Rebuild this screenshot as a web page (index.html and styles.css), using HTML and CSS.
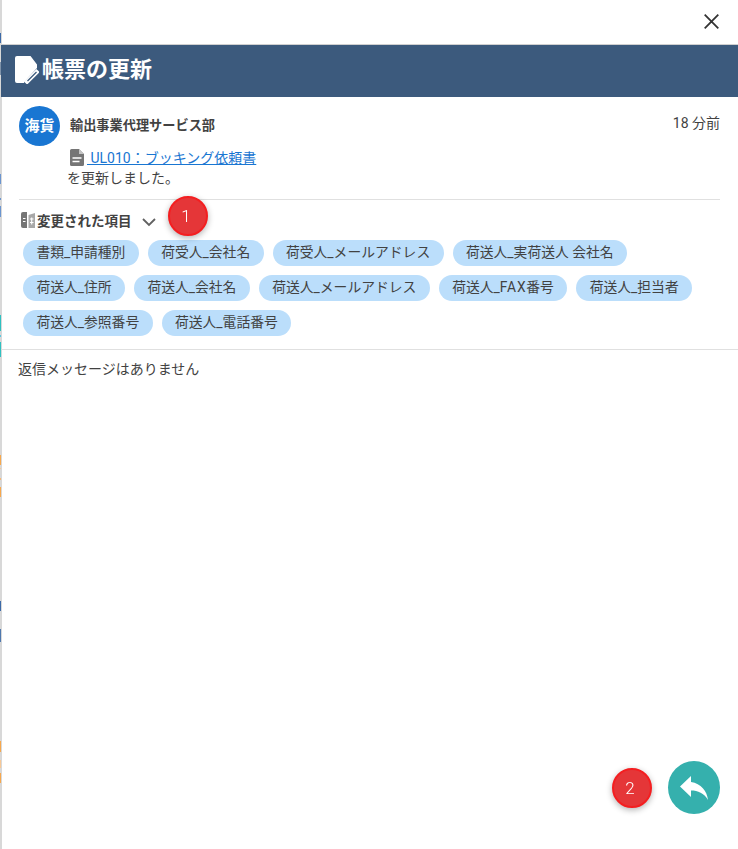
FILE: index.html
```html
<!DOCTYPE html>
<html lang="ja">
<head>
<meta charset="utf-8">
<title>帳票の更新</title>
<link rel="stylesheet" href="styles.css">
</head>
<body>
<div class="page">
  <div class="edge"></div>
  <main class="drawer">
    <div class="topbar">
      <svg class="close" viewBox="0 0 15 15" width="15" height="15"><path d="M.7.7L14.300 14.300M14.300.7L.7 14.300" fill="none" stroke="#333" stroke-width="1.800"/></svg>
    </div>
    <header class="title">
      <svg class="title-icon" viewBox="0 0 24 28" width="24" height="28"><path d="M2 0h13.500L22 8.500v3.500L9.500 25.500 9 27H2a2 2 0 0 1-2-2V2a2 2 0 0 1 2-2z" fill="#fff"/><path d="M10.500 27L23 14.500" stroke="#fff" stroke-width="4.500" fill="none"/><path d="M12.500 25L21.500 16" stroke="#3c5a7d" stroke-width="1.200" fill="none"/></svg>
      <h1>帳票の更新</h1>
    </header>
    <section class="post">
      <div class="post-head">
        <div class="avatar">海貨</div>
        <div class="name">輸出事業代理サービス部</div>
        <div class="time">18 分前</div>
      </div>
      <div class="post-body">
        <div class="doc-line">
          <svg class="doc-icon" viewBox="0 0 14 17" width="14" height="17"><path d="M1.500 0H9l5 5v10.500a1.500 1.500 0 0 1-1.500 1.500h-11A1.500 1.500 0 0 1 0 15.500v-14A1.500 1.500 0 0 1 1.500 0z" fill="#757575"/><path d="M2.500 9h9M2.500 12.500h7" stroke="#fff" stroke-width="1.600"/><path d="M9 0v5h5z" fill="#c4c4c4"/></svg>
          <a class="doc-link" href="#">&nbsp;UL010：ブッキング依頼書</a>
        </div>
        <p class="updated">を更新しました。</p>
      </div>
      <div class="changes">
        <div class="changes-head">
          <svg class="changes-icon" viewBox="0 0 14 16" width="14" height="16"><path d="M0 2a2 2 0 0 1 2-2h4v16H2a2 2 0 0 1-2-2z" fill="#757575"/><path d="M7.500 3L14 1v15H7.500z" fill="#a8a8a8"/><path d="M2 6.500h2.500M2 9.500h2.500M9 7h3.500M9 10.500h3.500M10.700 5.500v7" stroke="#fff" stroke-width="1.100"/></svg>
          <span class="changes-label">変更された項目</span>
          <svg class="chevron" viewBox="0 0 14 9" width="14" height="9"><path d="M1 1l6 6 6-6" fill="none" stroke="#616161" stroke-width="1.800"/></svg>
        </div>
        <ul class="chips">
          <li class="chip">書類_申請種別</li>
          <li class="chip">荷受人_会社名</li>
          <li class="chip">荷受人_メールアドレス</li>
          <li class="chip">荷送人_実荷送人 会社名</li>
          <li class="chip">荷送人_住所</li>
          <li class="chip">荷送人_会社名</li>
          <li class="chip">荷送人_メールアドレス</li>
          <li class="chip">荷送人_<span class="latin">FAX</span>番号</li>
          <li class="chip">荷送人_担当者</li>
          <li class="chip">荷送人_参照番号</li>
          <li class="chip">荷送人_電話番号</li>
        </ul>
      </div>
    </section>
    <section class="replies">返信メッセージはありません</section>
  </main>
</div>
<div class="marker marker-one">1</div>
<div class="marker marker-two">2</div>
<button class="fab" type="button" aria-label="返信">
  <svg viewBox="0 0 28 24" width="28" height="24"><path d="M11 0L0 10.500 11 21v-6.500c7 0 13 2.500 17 9.500-1-9-7-16.500-17-18z" fill="#fff"/></svg>
</button>
</body>
</html>
```
FILE: styles.css
```css
* { box-sizing: border-box; }
html, body { margin: 0; height: 100%; }
body {
  background: #fff;
  color: #424242;
  font-family: Roboto, "Noto Sans CJK JP", sans-serif;
  font-size: 14px;
  overflow: hidden;
}
.page { display: flex; height: 849px; }
.edge {
  width: 1px;
  flex: none;
  background: linear-gradient(to bottom,
    #d8d8d8 0 33px, #3c6aa8 33px 43px, #d8d8d8 43px 62px, #7f93aa 62px 75px,
    #d8d8d8 75px 174px, #6b95cf 174px 184px, #d8d8d8 184px 198px, #6b95cf 198px 200px,
    #d8d8d8 200px 206px, #6b95cf 206px 217px, #d8d8d8 217px 315px, #2fc1c1 315px 331px,
    #d8d8d8 331px 335px, #5cc8e0 335px 337px, #d8d8d8 337px 342px, #2fc1c1 342px 357px,
    #d8d8d8 357px 455px, #f7a84d 455px 465px, #d8d8d8 465px 468px, #f7c896 468px 469px,
    #d8d8d8 469px 478px, #f7b877 478px 480px, #d8d8d8 480px 487px, #f7a84d 487px 497px,
    #d8d8d8 497px 601px, #3c6aa8 601px 611px, #d8d8d8 611px 629px, #4f78ae 629px 642px,
    #d8d8d8 642px 741px, #f7a84d 741px 752px, #d8d8d8 752px 760px, #f7c896 760px 768px,
    #d8d8d8 768px 773px, #f7a84d 773px 783px, #d8d8d8 783px);
}
.drawer { flex: 1; min-width: 0; display: flex; flex-direction: column; }
.topbar {
  height: 45px;
  flex: none;
  display: flex;
  justify-content: flex-end;
  align-items: flex-start;
  padding: 14px 19px 0 0;
  border-left: 1px solid #d8d8d8;
  border-bottom: 1px solid #d0d0d0;
}
.close { display: block; }
.title {
  height: 52px;
  flex: none;
  display: flex;
  align-items: center;
  gap: 3px;
  padding: 0 0 2px 14px;
  background: #3c5a7d;
  color: #fff;
}
.title-icon { display: block; }
.title h1 { margin: 0; font-size: 22px; font-weight: 700; line-height: 1; }
.post {
  flex: none;
  padding: 9px 18px 0 17px;
  border-left: 1px solid #d8d8d8;
  border-bottom: 1px solid #e0e0e0;
  height: 253px;
}
.post-head { display: flex; align-items: center; height: 40px; }
.avatar {
  width: 41px;
  height: 40px;
  flex: none;
  border-radius: 50%;
  background: #1976d2;
  color: #fff;
  font-size: 15px;
  font-weight: 700;
  line-height: 40px;
  text-align: center;
}
.name { margin-left: 10px; font-size: 13.200px; font-weight: 700; line-height: 20px; }
.time { margin-left: auto; font-size: 14px; line-height: 20px; padding-bottom: 7px; }
.post-body { padding: 1px 0 0 48px; }
.doc-line { display: flex; align-items: center; gap: 3px; height: 21px; padding-left: 3px; }
.doc-icon { display: block; flex: none; }
.doc-link { color: #1976d2; text-decoration: underline; font-size: 14px; line-height: 20px; }
.updated { margin: 0; font-size: 14px; line-height: 20px; }
.changes { margin-top: 11px; border-top: 1px solid #e0e0e0; }
.changes-head { display: flex; align-items: center; height: 40px; padding-left: 2px; }
.changes-icon { display: block; flex: none; margin-right: 2px; }
.changes-label { font-size: 13.500px; font-weight: 700; }
.chevron { margin: 5px 0 0 10px; display: block; }
.chips {
  list-style: none;
  margin: 0;
  padding: 0 0 0 4px;
  display: flex;
  flex-wrap: wrap;
  gap: 9px 9px;
}
.chip {
  height: 26px;
  padding: 0 13.400px;
  border-radius: 13px;
  background: #bbdefb;
  font-size: 13.800px;
  line-height: 25px;
  white-space: nowrap;
}
.latin { letter-spacing: .8px; }
.replies {
  flex: 1;
  padding: 9px 16px;
  font-size: 14px;
  line-height: 20px;
  border-left: 1px solid #d8d8d8;
}
.marker {
  position: fixed;
  width: 40px;
  height: 40px;
  border-radius: 50%;
  background: #e53638;
  border: 2px solid #f41e20;
  color: #fff;
  font-size: 17px;
  font-weight: 300;
  display: flex;
  align-items: center;
  justify-content: center;
  padding-right: 4px;
  box-shadow: 0 2px 6px rgba(0, 0, 0, .3);
}
.marker-one { left: 168px; top: 196px; }
.marker-two { left: 612px; top: 768px; }
.fab {
  position: fixed;
  left: 668px;
  top: 761px;
  width: 52px;
  height: 53px;
  padding: 0;
  border: 0;
  border-radius: 50%;
  background: #35b0ad;
  display: flex;
  align-items: center;
  justify-content: center;
}
.fab svg { display: block; }
```
